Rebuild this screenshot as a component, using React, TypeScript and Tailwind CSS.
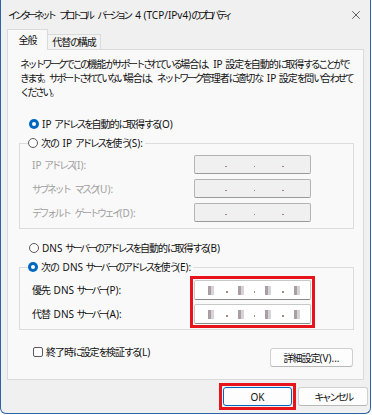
import { X } from 'lucide-react';

// Yu Gothic UI is much narrower than Noto CJK: squeeze kana and kanji runs, leave latin alone
const KANA = /[\u3000-\u30ff\uff00-\uffef]/;
const KANJI = /[\u4e00-\u9fff]/;

const T = ({ s, tight }: { s: string; tight?: boolean }) => {
  const parts = s.split(/([\u3000-\u30ff\uff00-\uffef]+|[\u4e00-\u9fff]+)/).filter(Boolean);
  return (
    <>
      {parts.map((p, i) => {
        const spaceNext = (parts[i + 1] || '').startsWith(' ');
        if (KANA.test(p)) {
          let cls = tight ? 'tracking-[-3.5px]' : 'tracking-[-2.5px]';
          if (spaceNext) cls = tight ? 'tracking-[-3.5px] mr-[3px]' : 'tracking-[-2.5px] mr-[2.5px]';
          return (
            <span key={i} className={cls}>
              {p}
            </span>
          );
        }
        if (KANJI.test(p))
          return (
            <span key={i} className={spaceNext ? 'tracking-[-1px] mr-[1px]' : 'tracking-[-1px]'}>
              {p}
            </span>
          );
        return <span key={i}>{p}</span>;
      })}
    </>
  );
};

const Radio = ({ checked }: { checked?: boolean }) =>
  checked ? (
    <span className="w-[10px] h-[10px] rounded-full bg-[#0067c0] flex items-center justify-center shrink-0">
      <span className="w-[4px] h-[4px] rounded-full bg-white"></span>
    </span>
  ) : (
    <span className="w-[10px] h-[10px] rounded-full border border-[#5b5b5b] bg-[#fbfbfb] shrink-0"></span>
  );

const Dot = () => <span className="block w-[1.5px] h-[1.5px] bg-[#9a8a80] mt-[4px]"></span>;

const Blk = () => (
  <span className="flex h-[9px]">
    <span className="w-[3px] bg-[#aa9ea5]"></span>
    <span className="w-[3px] bg-[#d6d3d9]"></span>
  </span>
);

const IpBox = ({ blurred }: { blurred?: boolean }) => {
  if (!blurred) {
    return (
      <div className="w-[117px] h-[19px] rounded-[2px] border border-[#b4b4b4] border-b-[#9a9a9a] bg-[#f0f0f0] flex items-center">
        <span className="ml-[30px]"><Dot /></span>
        <span className="ml-[27px]"><Dot /></span>
        <span className="ml-[27px]"><Dot /></span>
      </div>
    );
  }
  return (
    <div className="w-[117px] h-[20px] rounded-[2px] border border-[#c8c8c8] border-b-[#8a8a8a] bg-white flex items-center">
      <span className="ml-[13px]"><Blk /></span>
      <span className="ml-[12px]"><Dot /></span>
      <span className="ml-[10px]"><Blk /></span>
      <span className="ml-[10px]"><Dot /></span>
      <span className="ml-[10px]"><Blk /></span>
      <span className="ml-[11px]"><Dot /></span>
      <span className="ml-[10px]"><Blk /></span>
    </div>
  );
};

const Row = ({ label }: { label: string }) => (
  <div className="flex items-center">
    <span className="ml-[4px] w-[162px] text-[#a0a0a0] whitespace-nowrap">
      <T s={label} />
    </span>
    <IpBox />
  </div>
);

export default function App() {
  return (
    <div className="w-[372px] h-[415px] bg-white text-[#111] text-[10px] leading-[14px] font-['Noto_Sans','Noto_Sans_CJK_JP',sans-serif]">
      <div className="w-[371px] h-[414px] bg-[#f0f0f0] border-x border-b border-[#2d64a8] rounded-b-[6px] flex flex-col">
        {/* title */}
        <div className="h-[29px] flex items-center justify-between pl-[7px] pr-[7px]">
          <span className="whitespace-nowrap">
            <T s="インターネット プロトコル バージョン 4 (TCP/IPv4)のプロパティ" tight />
          </span>
          <X size={14} strokeWidth={1.2} className="text-[#222]" />
        </div>

        {/* tabs */}
        <div className="h-[21px] -mb-px ml-[6px] flex items-end relative z-10 whitespace-nowrap">
          <div className="w-[41px] h-[21px] bg-[#f9f9f9] border-x border-t border-[#dadada] flex items-center justify-center pb-[1px]">
            <T s="全般" />
          </div>
          <div className="w-[53px] h-[16px] bg-[#f3f3f3] border-t border-r border-b border-[#dadada] flex items-center justify-center">
            <T s="代替の構成" />
          </div>
        </div>

        {/* panel */}
        <div className="ml-[6px] w-[357px] h-[331px] bg-[#f9f9f9] border border-[#dadada] flex flex-col">
          <p className="mt-[7px] pl-[12px] whitespace-nowrap">
            <T s="ネットワークでこの機能がサポートされている場合は、IP 設定を自動的に取得することがで" />
            <br />
            <T s="きます。サポートされていない場合は、ネットワーク管理者に適切な IP 設定を問い合わせて" />
            <br />
            <T s="ください。" />
          </p>

          <label className="mt-[17px] ml-[21px] h-[16px] flex items-center gap-[3px]">
            <Radio checked />
            <span className="whitespace-nowrap"><T s="IP アドレスを自動的に取得する(O)" /></span>
          </label>

          <fieldset className="mt-[3px] ml-[11px] w-[335px] border border-[#dcdcdc] pl-[8px] pb-[6px]">
            <legend className="h-[16px] flex items-center gap-[3px] pr-[2px] whitespace-nowrap">
              <Radio />
              <span><T s="次の IP アドレスを使う(S):" /></span>
            </legend>
            <div className="mt-[4px] flex flex-col gap-[5px]">
              <Row label="IP アドレス(I):" />
              <Row label="サブネット マスク(U):" />
              <Row label="デフォルト ゲートウェイ(D):" />
            </div>
          </fieldset>

          <label className="mt-[11px] ml-[21px] h-[16px] flex items-center gap-[3px]">
            <Radio />
            <span className="whitespace-nowrap"><T s="DNS サーバーのアドレスを自動的に取得する(B)" /></span>
          </label>

          <fieldset className="mt-[3px] ml-[11px] w-[335px] border border-[#dcdcdc] pl-[8px] pb-[1px]">
            <legend className="h-[16px] flex items-center gap-[3px] pr-[2px] whitespace-nowrap">
              <Radio checked />
              <span><T s="次の DNS サーバーのアドレスを使う(E):" /></span>
            </legend>
            <div className="mt-[1px] flex items-center">
              <div className="ml-[4px] w-[158px] flex flex-col gap-[10px] whitespace-nowrap">
                <span><T s="優先 DNS サーバー(P):" /></span>
                <span><T s="代替 DNS サーバー(A):" /></span>
              </div>
              <div className="border-[3px] border-[#e8141c] p-[1px] flex flex-col gap-[4px]">
                <IpBox blurred />
                <IpBox blurred />
              </div>
            </div>
          </fieldset>

          <div className="mt-[14px] ml-[25px] mr-[10px] flex items-start justify-between whitespace-nowrap">
            <label className="h-[16px] flex items-center gap-[3px]">
              <span className="w-[10px] h-[10px] rounded-[2px] border border-[#5b5b5b] bg-[#fbfbfb]"></span>
              <span><T s="終了時に設定を検証する(L)" /></span>
            </label>
            <button className="mt-[4px] w-[83px] h-[19px] rounded-[3px] border border-[#d0d0d0] border-b-[#b8b8b8] bg-[#fdfdfd] flex items-center justify-center">
              <T s="詳細設定(V)..." />
            </button>
          </div>
        </div>

        {/* footer */}
        <div className="mt-[3px] mr-[2px] flex items-start justify-end gap-[2px] whitespace-nowrap">
          <div className="border-[3px] border-[#e8141c] p-[1px]">
            <button className="w-[69px] h-[19px] rounded-[3px] border border-[#0067c0] bg-[#fdfdfd] flex items-center justify-center">
              OK
            </button>
          </div>
          <button className="mt-[4px] w-[70px] h-[19px] rounded-[3px] border border-[#d0d0d0] border-b-[#b8b8b8] bg-[#fdfdfd] flex items-center justify-center">
            <T s="キャンセル" />
          </button>
        </div>
      </div>
    </div>
  );
}
